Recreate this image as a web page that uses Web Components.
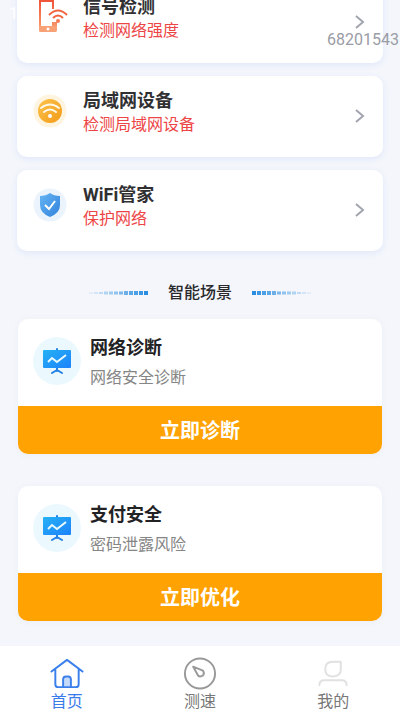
<!DOCTYPE html>
<html lang="zh-CN">
<head>
<meta charset="utf-8">
<meta name="viewport" content="width=device-width, initial-scale=1">
<title>WiFi管家</title>
<style>
  body { margin: 0; font-family: Roboto, "Noto Sans CJK SC", sans-serif; background: #f4f6fb; color: #2b2b2d; }
</style>
</head>
<body>
<wifi-app></wifi-app>

<template id="app-tpl">
  <style>
    :host { display: flex; flex-direction: column; height: 100vh; position: relative; overflow: hidden; }
    main { flex: 1; min-height: 0; overflow: hidden; display: flex; flex-direction: column; justify-content: flex-end; padding: 0 18px 25px; }
    .tools { display: grid; gap: 13px; margin: 0 -1px; }
    .scenes { display: grid; gap: 32px; }
    .clock, .mark { position: absolute; line-height: 20px; font-size: 16px; pointer-events: none; }
    .clock { left: 9px; top: 4px; color: #fff; }
    .mark { right: 1px; top: 30px; color: #9a9ca6; }
  </style>
  <main>
    <section class="tools">
      <tool-card icon="phone"><span slot="title">信号检测</span><span slot="note">检测网络强度</span></tool-card>
      <tool-card icon="wifi"><span slot="title">局域网设备</span><span slot="note">检测局域网设备</span></tool-card>
      <tool-card icon="shield"><span slot="title">WiFi管家</span><span slot="note">保护网络</span></tool-card>
    </section>
    <section-title>智能场景</section-title>
    <section class="scenes">
      <scene-card><span slot="title">网络诊断</span><span slot="note">网络安全诊断</span><span slot="action">立即诊断</span></scene-card>
      <scene-card><span slot="title">支付安全</span><span slot="note">密码泄露风险</span><span slot="action">立即优化</span></scene-card>
    </section>
  </main>
  <tab-bar></tab-bar>
  <span class="clock">1</span>
  <span class="mark">68201543</span>
</template>

<template id="tool-tpl">
  <style>
    :host { display: block; }
    a { display: flex; align-items: center; min-height: 81px; box-sizing: border-box; padding: 0 17px 0 15px; gap: 15px; background: #fff; border-radius: 10px; box-shadow: 0 2px 6px #dfe7fa; color: inherit; text-decoration: none; }
    .icon { display: flex; width: 36px; height: 36px; padding-bottom: 11px; }
    .text { flex: 1; padding-bottom: 7px; }
    .title { font-size: 18px; line-height: 24px; font-weight: 700; color: #303033; }
    .note { font-size: 16px; line-height: 24px; color: #ed4545; }
    svg { display: block; overflow: visible; }
    .go { padding-bottom: 2px; }
  </style>
  <a href="#"><span class="icon"></span>
    <div class="text"><div class="title"><slot name="title"></slot></div><div class="note"><slot name="note"></slot></div></div>
    <svg class="go" width="12" height="16" viewBox="0 0 12 16" fill="none" stroke="#a2a5b0" stroke-width="2"><path d="M2 2l7 6-7 6"/></svg>
  </a>
</template>

<template id="title-tpl">
  <style>
    :host { display: flex; justify-content: center; align-items: center; gap: 19px; padding: 30px 0 14px; }
    h2 { margin: 0; font-size: 16px; line-height: 24px; font-weight: 500; color: #29292b; }
    .flip { transform: scaleX(-1); }
  </style>
  <svg class="dots" width="62" height="6"></svg>
  <h2><slot></slot></h2>
  <svg class="dots flip" width="62" height="6"></svg>
</template>

<template id="scene-tpl">
  <style>
    :host { display: block; background: #fff; border-radius: 10px; overflow: hidden; box-shadow: 0 1px 6px #ebeef5; }
    .head { display: flex; align-items: center; gap: 9px; min-height: 87px; padding: 0 15px; box-sizing: border-box; }
    .head svg { padding-bottom: 4px; }
    .title { font-size: 18px; line-height: 30px; font-weight: 700; color: #222224; }
    .note { font-size: 16px; line-height: 30px; color: #858585; }
    button { display: block; width: 100%; height: 48px; border: 0; padding: 2px 0 0; background: #ffa202; color: #fff; font: 700 20px/46px Roboto, "Noto Sans CJK SC", sans-serif; }
  </style>
  <div class="head">
    <svg width="48" height="48" viewBox="0 0 48 48">
      <defs><linearGradient id="g" x1="0" y1="0" x2="1" y2="1"><stop stop-color="#25b1f5"/><stop offset="1" stop-color="#1d82fb"/></linearGradient></defs>
      <circle cx="24" cy="24" r="24" fill="#ebf9ff"/>
      <path d="M24 12v3M24 31v3M19 36l5-3 5 3" fill="none" stroke="#2380e6" stroke-width="2" stroke-linecap="round" stroke-linejoin="round"/>
      <rect x="10" y="13" width="28" height="18" rx="1" fill="url(#g)"/>
      <path d="M15 25l4-4 5 4 9-7" fill="none" stroke="#e8faff" stroke-width="2"/>
    </svg>
    <div><div class="title"><slot name="title"></slot></div><div class="note"><slot name="note"></slot></div></div>
  </div>
  <button type="button"><slot name="action"></slot></button>
</template>

<template id="tabs-tpl">
  <style>
    :host { display: block; background: #fff; }
    nav { display: grid; grid-template-columns: repeat(3, 1fr); }
    a { display: flex; flex-direction: column; align-items: center; gap: 1px; height: 66px; padding-top: 10px; box-sizing: border-box; color: #777; text-decoration: none; font-size: 16px; line-height: 20px; }
    a[aria-current] { color: #397be8; }
    svg { display: block; width: 36px; height: 36px; fill: none; }
  </style>
  <nav>
    <a href="#" aria-current="page">
      <svg viewBox="0 0 36 36" stroke="#3a7fec" stroke-width="2" stroke-linecap="round" stroke-linejoin="round"><path d="M2 16L18 4l16 12M6 14v15q0 3 3 3h18q3 0 3-3V14"/><path d="M14 32v-8q0-3 3-3h2q3 0 3 3v8z" fill="#c5daf9"/></svg>首页</a>
    <a href="#">
      <svg viewBox="0 0 36 36" stroke="#999" stroke-width="2" stroke-linejoin="round"><circle cx="18" cy="18" r="15.5"/><path d="M11 11l10 4q2 3 0 5-3 2-5 0z"/></svg>测速</a>
    <a href="#">
      <svg viewBox="0 0 36 36" stroke="#e1e1e1" stroke-width="2" stroke-linecap="round" stroke-linejoin="round"><path d="M18 6h8v8q0 7-8 7t-8-7.500q0-7.500 8-7.500zM4 30q0-5 5-5h18q5 0 5 5"/></svg>我的</a>
  </nav>
</template>

<script>
  const icons = {
    phone: `<svg width="36" height="36" viewBox="0 0 36 36"><defs><linearGradient id="p" x1="0" y1="0" x2="0" y2="1"><stop stop-color="#ee4b32"/><stop offset="1" stop-color="#f9a374"/></linearGradient></defs>
      <path fill="url(#p)" fill-rule="evenodd" d="M10-2h9q3 0 3 3v9h-2V3H9v24h11v-4h5v7q0 3-3 3H9q-2 0-2-2V1q0-3 3-3z"/>
      <path fill="#f8a176" d="M7 27h18v4q0 2-2 2H9q-2 0-2-2z"/><circle cx="16" cy="30" r="1.500" fill="#fff"/><path d="M13 0h6" stroke="#fff"/>
      <g fill="none" stroke="#f06440" stroke-width="2"><path d="M17 16q9-9 18 0M21 19q5-5 10 0"/></g><circle cx="26" cy="22" r="2" fill="#f27a55"/></svg>`,
    wifi: `<svg width="36" height="36" viewBox="0 0 36 36"><defs><linearGradient id="w" x1="0" y1="0" x2="1" y2="1"><stop stop-color="#fbc44e"/><stop offset="1" stop-color="#f39a17"/></linearGradient></defs>
      <circle cx="18" cy="18" r="16.500" fill="#fef4df"/><circle cx="18" cy="18" r="12" fill="url(#w)"/>
      <g fill="none" stroke="#fff8e8" stroke-width="2" stroke-linecap="round"><path d="M9 15q9-7 18 0M12 19q6-5 12 0"/></g><circle cx="18" cy="23" r="2" fill="#fff"/></svg>`,
    shield: `<svg width="36" height="36" viewBox="0 0 36 36"><defs><linearGradient id="s" x1="0" y1="0" x2="1" y2="1"><stop stop-color="#66b5f4"/><stop offset="1" stop-color="#3182dc"/></linearGradient></defs>
      <circle cx="18" cy="18" r="16.500" fill="#ebf3fc"/><path fill="url(#s)" d="M18 6q4 3 10 3v9q0 8-10 12Q8 26 8 18V9q6 0 10-3z"/>
      <path d="M13 18l4 4 6-8" fill="none" stroke="#fff" stroke-width="2"/></svg>`
  };

  class Base extends HTMLElement {
    constructor() {
      super();
      this.attachShadow({ mode: "open" }).append(document.getElementById(this.constructor.tpl).content.cloneNode(true));
    }
  }
  class ToolCard extends Base {
    static tpl = "tool-tpl";
    connectedCallback() { this.shadowRoot.querySelector(".icon").innerHTML = icons[this.getAttribute("icon")]; }
  }
  class SectionTitle extends Base {
    static tpl = "title-tpl";
    connectedCallback() {
      for (const svg of this.shadowRoot.querySelectorAll(".dots")) {
        let out = "";
        for (let i = 0; i < 12; i++) {
          const h = i < 3 ? 2 : i < 7 ? 3 : 4;
          out += `<rect x="${2 + i * 5}" y="${3 - h / 2}" width="4" height="${h}" fill="#2a8de0" opacity="${(i + 1) / 12}"/>`;
        }
        svg.innerHTML = out;
      }
    }
  }
  class SceneCard extends Base { static tpl = "scene-tpl"; }
  class TabBar extends Base { static tpl = "tabs-tpl"; }
  class WifiApp extends Base { static tpl = "app-tpl"; }

  customElements.define("tool-card", ToolCard);
  customElements.define("section-title", SectionTitle);
  customElements.define("scene-card", SceneCard);
  customElements.define("tab-bar", TabBar);
  customElements.define("wifi-app", WifiApp);
</script>
</body>
</html>
